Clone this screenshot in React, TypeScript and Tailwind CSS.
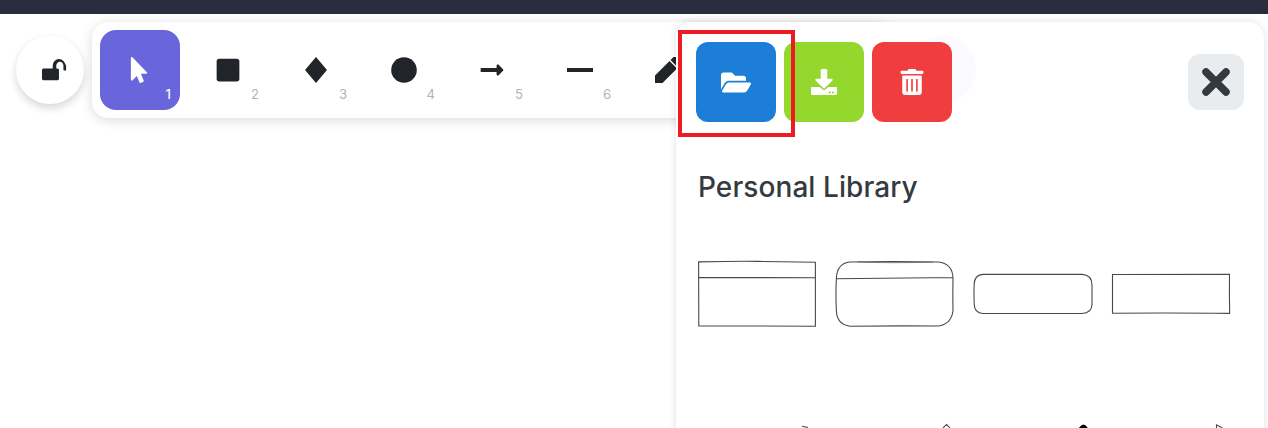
import type { ReactNode } from "react";
import { FaMousePointer, FaSquare, FaLongArrowAltRight, FaFolderOpen, FaDownload, FaTrashAlt } from "react-icons/fa";

function Tool({ children, label, active = false }: { children: ReactNode; label: string; active?: boolean }) {
  return (
    <button
      className={
        active
          ? "relative flex size-20 shrink-0 items-center justify-center rounded-2xl bg-[#6965db] text-white"
          : "relative flex size-20 shrink-0 items-center justify-center rounded-2xl text-[#212529]"
      }
    >
      {children}
      <span
        className={
          active
            ? "absolute right-[9px] bottom-2 text-[13px] leading-[15px] font-medium text-white"
            : "absolute right-[9px] bottom-2 text-[13px] leading-[15px] text-[#adb5bd]"
        }
      >
        {label}
      </span>
    </button>
  );
}

function LibraryShapes() {
  return (
    <svg className="mt-[53px] block h-[170px] w-[540px]" viewBox="0 0 540 170" fill="none" stroke="#484848" strokeWidth="1.1">
      <path d="M.6 3.9Q40 3.1 60 3.400T117.400 4.200V68.200L.8 67.900ZM.6 19.600L117.400 19.700" />
      <path d="M152 4Q195 3.300 240 4Q254.500 5.500 255 20Q254.600 38 255 53Q253 66.500 240 68Q195 67.600 152 68.200Q139 66.500 138.400 53Q137.500 35 138.400 20Q139 5.500 152 4M138.200 20.700L255.400 19.500" />
      <path d="M160 4Q195 5.400 235 4" strokeWidth=".6" />
      <path d="M285 16.400H384Q394 17 394 27V46Q394 55 384 55.500H285Q276.200 55 276.200 46Q275.800 35 276.200 26Q276.500 17 285 16.400Z" />
      <path d="M414.500 16.500L531.500 16.200Q531.200 35 531.700 55.400Q480 54.700 414.500 55.200Z" />
      <path d="M104 168.300l6 1.200M245 169.800l3.500-3.200 3.500 3.200M518.500 170v-3.200l6 3.200" />
      <path d="M380.500 170.500q2-3 5-4 2.500 0 4.500 4z" fill="#000" stroke="none" />
    </svg>
  );
}

export default function App() {
  return (
    <div className="relative flex h-[428px] w-[1268px] flex-col overflow-hidden bg-white font-['Inter','Liberation_Sans',sans-serif]">
      <header className="h-3.5 shrink-0 bg-[#2a2d3e]" />
      <div className="flex gap-2 px-4 pt-2">
        <button className="mt-3.5 flex size-[68px] shrink-0 items-center justify-center rounded-full bg-white shadow-[0_4px_8px_rgba(0,0,0,0.16)]">
          <svg className="ml-2 h-[27px] w-[25px]" viewBox="0 0 1792 1792" fill="#212529" preserveAspectRatio="none">
            <path d="M1728 576v256q0 26-19 45t-45 19h-64q-26 0-45-19t-19-45V576q0-106-75-181t-181-75-181 75-75 181v192h96q40 0 68 28t28 68v576q0 40-28 68t-68 28H96q-40 0-68-28t-28-68V864q0-40 28-68t68-28h672V576q0-185 131.500-316.500T1216 128t316.500 131.500T1728 576z" />
          </svg>
        </button>
        <nav className="flex h-24 w-[800px] shrink-0 gap-2 overflow-hidden rounded-2xl bg-white p-2 shadow-[0_2px_12px_rgba(0,0,0,0.15)]">
          <Tool label="1" active><FaMousePointer size={26} className="-ml-0.5" /></Tool>
          <Tool label="2"><FaSquare size={26} className="-ml-px" /></Tool>
          <Tool label="3">
            <svg className="size-[26px]" viewBox="0 0 26 26" fill="currentColor"><path d="M13 0 24 13 13 26 2 13z" /></svg>
          </Tool>
          <Tool label="4">
            <svg className="size-[26px]" viewBox="0 0 26 26" fill="currentColor"><circle cx="13" cy="13" r="12.8" /></svg>
          </Tool>
          <Tool label="5"><FaLongArrowAltRight size={26} className="-ml-px" /></Tool>
          <Tool label="6">
            <svg className="size-[26px]" viewBox="0 0 26 26" fill="currentColor"><path d="M0 11h26v4H0z" /></svg>
          </Tool>
          <Tool label="7">
            <svg className="size-[26px]" viewBox="0 0 26 26" fill="currentColor"><path d="M0 18.500 14.500 4 22 11.500 7.500 26H0ZM15.500 3 18.500 0H21L26 5v2.500L23 10.500Z" /></svg>
          </Tool>
        </nav>
      </div>
      <aside className="absolute top-[22px] left-[676px] h-[440px] w-[588px] rounded-2xl bg-white px-5 pt-5 shadow-[0_0_8px_rgba(0,0,0,0.12)]">
        <span className="absolute top-[14px] left-[232px] size-[68px] rounded-full bg-[#fbfaff]" />
        <div className="relative flex items-start justify-between">
          <div className="flex gap-2">
            <button className="flex size-20 items-center justify-center rounded-xl bg-[#1c7ed6] text-white"><FaFolderOpen className="h-[27px] w-[30px]" /></button>
            <button className="flex size-20 items-center justify-center rounded-xl bg-[#94d82d] text-white"><FaDownload size={26} /></button>
            <button className="flex size-20 items-center justify-center rounded-xl bg-[#f03e3e] text-white"><FaTrashAlt size={26} /></button>
          </div>
          <button className="mt-3 flex size-14 items-center justify-center rounded-xl bg-[#e9ecef]">
            <svg className="size-7" viewBox="0 0 28 28" stroke="#343a40" strokeWidth="7.500" strokeLinecap="round"><path d="M4 4 24 24M24 4 4 24" /></svg>
          </button>
        </div>
        <h2 className="mt-[47px] pl-0.5 text-[28px] leading-9 font-medium tracking-[0.08px] whitespace-nowrap text-[#343a40]">Personal Library</h2>
        <div className="pl-0.5"><LibraryShapes /></div>
      </aside>
      <div className="absolute top-[30px] left-[678px] h-[107px] w-[117px] border-4 border-[#ed1c24]" />
    </div>
  );
}
